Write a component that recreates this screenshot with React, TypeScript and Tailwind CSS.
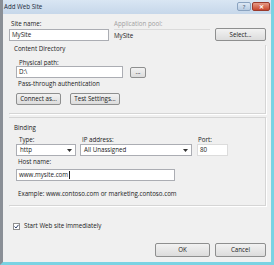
import React from "react";

const font = { fontFamily: '"Open Sans", "Noto Sans", sans-serif' };

function Btn({ children, className = "" }: { children: React.ReactNode; className?: string }) {
  return (
    <div
      className={`flex items-center justify-center rounded-[2px] border border-[#8e8f8f] bg-gradient-to-b from-[#f2f2f2] to-[#dcdcdc] text-[6.2px] text-[#1a1a1a] ${className}`}
    >
      {children}
    </div>
  );
}

function Field({ children, className = "" }: { children?: React.ReactNode; className?: string }) {
  return (
    <div className={`flex items-center border border-[#abadb3] bg-white px-[2px] text-[6.2px] text-[#1a1a1a] ${className}`}>
      {children}
    </div>
  );
}

function Combo({ value, className = "" }: { value: string; className?: string }) {
  return (
    <div className={`flex items-center justify-between border border-[#abadb3] bg-white pl-[3px] pr-[3px] text-[6.2px] text-[#1a1a1a] ${className}`}>
      <span>{value}</span>
      <svg width="5" height="3" viewBox="0 0 5 3">
        <path d="M0 0h5L2.5 3z" fill="#333" />
      </svg>
    </div>
  );
}

export default function App() {
  return (
    <div className="relative h-[265px] w-[274px] overflow-hidden bg-[#f0f0f0]" style={font}>
      <div className="flex h-full flex-col border-b-[3px] border-l-[3px] border-r-[3px] border-b-[#7ad3e3] border-l-[#8a8f96] border-r-[#7ad3e3]">
        {/* title bar */}
        <div className="flex h-[14px] items-center justify-between bg-gradient-to-b from-[#d9e6f3] to-[#c6d7ea] pl-[1px] pr-[1px]">
          <span className="text-[6.2px] text-[#1c2a3a]">Add Web Site</span>
          <div className="mt-[2px] flex gap-[1px] self-start">
            <div className="flex h-[9px] w-[14px] items-center justify-center rounded-[2px] border border-[#8aa3c0] bg-gradient-to-b from-[#dde8f4] to-[#b8cce2] text-[6px] leading-none text-[#33465e]">
              ?
            </div>
            <div className="flex h-[9px] w-[18px] items-center justify-center rounded-[2px] border border-[#9a3a2c] bg-gradient-to-b from-[#e59a86] to-[#c7452c] text-[6px] font-bold leading-none text-white">
              ✕
            </div>
          </div>
        </div>

        <div className="flex flex-1 flex-col pl-[6px] pr-[5px] pt-[6px] text-[6.2px] text-[#1a1a1a]">
          {/* site name row */}
          <div className="flex items-end">
            <div className="flex w-[100px] flex-col">
              <span className="pl-[2px] leading-[8px]">Site name:</span>
              <Field className="mt-[1px] h-[12px]">MySite</Field>
            </div>
            <div className="ml-[5px] flex w-[96px] flex-col">
              <span className="leading-[8px] text-[#a0a0a0]">Application pool:</span>
              <div className="mt-[1px] flex h-[12px] items-center border-t border-[#dadada]">MySite</div>
            </div>
            <Btn className="ml-[5px] h-[13px] w-[51px]">Select...</Btn>
          </div>

          {/* content directory */}
          <div className="mt-[4px] flex flex-col border-b border-r border-[#d5d5d5] pb-[8px] pl-[5px] shadow-[1px_1px_0_#ffffff]">
            <span className="leading-[8px]">Content Directory</span>
            <span className="ml-[5px] mt-[6px] leading-[7px]">Physical path:</span>
            <div className="ml-[2px] flex items-center gap-[7px]">
              <Field className="h-[12px] w-[107px]">D:\</Field>
              <Btn className="h-[11px] w-[16px]">...</Btn>
            </div>
            <span className="ml-[4px] mt-[2px] leading-[8px]">Pass-through authentication</span>
            <div className="ml-[2px] mt-[5px] flex gap-[9px]">
              <Btn className="h-[12px] w-[45px]">Connect as...</Btn>
              <Btn className="h-[12px] w-[50px]">Test Settings...</Btn>
            </div>
          </div>

          {/* binding */}
          <div className="mt-[3px] flex flex-col border-b border-r border-t border-[#d5d5d5] pb-[7px] pl-[5px] pt-[6px] shadow-[1px_1px_0_#ffffff]">
            <span className="leading-[8px]">Binding</span>
            <div className="ml-[2px] mt-[4px] flex items-end">
              <div className="flex w-[60px] flex-col">
                <span className="pl-[3px] leading-[8px]">Type:</span>
                <Combo value="http" className="h-[12px]" />
              </div>
              <div className="ml-[4px] flex w-[112px] flex-col">
                <span className="pl-[2px] leading-[8px]">IP address:</span>
                <Combo value="All Unassigned" className="h-[12px]" />
              </div>
              <div className="ml-[5px] flex w-[31px] flex-col">
                <span className="pl-[1px] leading-[8px]">Port:</span>
                <Field className="h-[12px] border-[#dcdcdc]">80</Field>
              </div>
            </div>
            <span className="ml-[4px] mt-[2px] leading-[8px]">Host name:</span>
            <Field className="ml-[2px] mt-[3px] h-[12px] w-[159px] border-[#8fb4d6]">
              www.mysite.com<span className="ml-[0.5px] h-[8px] w-[1px] bg-[#222]" />
            </Field>
            <span className="ml-[4px] mt-[9px] leading-[8px]">Example: www.contoso.com or marketing.contoso.com</span>
          </div>

          {/* start checkbox */}
          <div className="ml-[4px] mt-[16px] flex items-center gap-[4px]">
            <div className="flex h-[7px] w-[7px] items-center justify-center border border-[#8f8f8f] bg-white">
              <svg width="5" height="5" viewBox="0 0 5 5">
                <path d="M0.5 2.5L2 4L4.5 0.8" stroke="#2d3f6a" strokeWidth="1" fill="none" />
              </svg>
            </div>
            <span className="leading-[8px]">Start Web site immediately</span>
          </div>

          <div className="mt-auto mb-[5px] flex justify-end gap-[5px]">
            <Btn className="h-[14px] w-[55px] border-[#3c7fb1] from-[#eaf6fd] to-[#bee6fd]">OK</Btn>
            <Btn className="h-[14px] w-[51px]">Cancel</Btn>
          </div>
        </div>
      </div>
    </div>
  );
}
